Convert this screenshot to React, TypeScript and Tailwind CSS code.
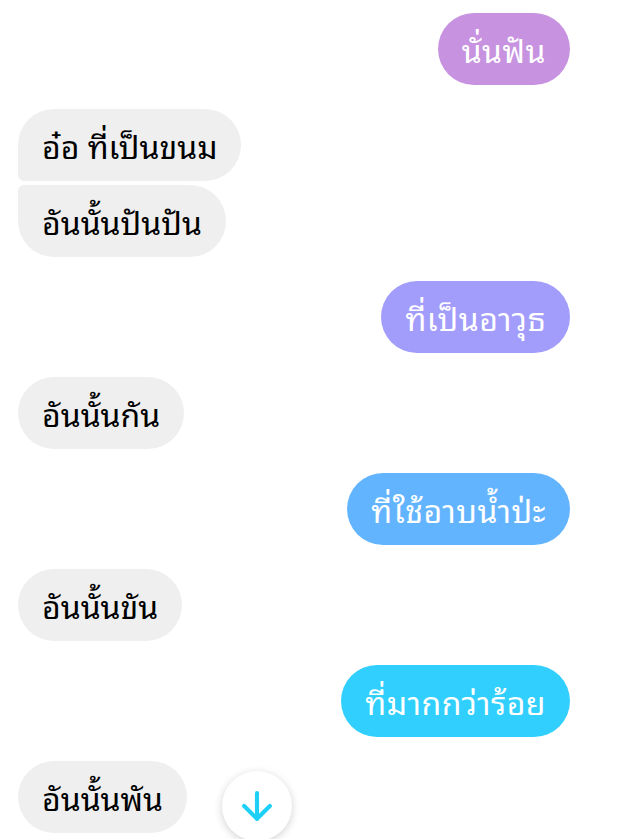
import React from "react";
import { ArrowDown } from "lucide-react";

type Msg = { id: number; text: string; mine: boolean; bg?: string; shape?: string };

const messages: Msg[] = [
  { id: 1, text: "นั่นฟัน", mine: true, bg: "bg-[#c792e0]" },
  { id: 2, text: "อ๋อ ที่เป็นขนม", mine: false, shape: "rounded-[36px] rounded-bl-[6px]" },
  { id: 3, text: "อันนั้นปันปัน", mine: false, shape: "rounded-[36px] rounded-tl-[6px]" },
  { id: 4, text: "ที่เป็นอาวุธ", mine: true, bg: "bg-[#a29cfb]" },
  { id: 5, text: "อันนั้นกัน", mine: false },
  { id: 6, text: "ที่ใช้อาบน้ำป่ะ", mine: true, bg: "bg-[#63b4fe]" },
  { id: 7, text: "อันนั้นขัน", mine: false },
  { id: 8, text: "ที่มากกว่าร้อย", mine: true, bg: "bg-[#31cffd]" },
  { id: 9, text: "อันนั้นพัน", mine: false },
];

export default function App() {
  return (
    <div className="relative h-[839px] w-[618px] overflow-hidden bg-white font-['Noto_Sans_Thai_Looped','Noto_Sans',sans-serif]">
      <div className="flex flex-col pl-[18px] pr-[48px] pt-[13px]">
        {messages.map((m, i) => {
          const prev = messages[i - 1];
          const gap = !prev ? "" : prev.mine === m.mine ? "mt-1" : "mt-6";
          return (
            <div key={m.id} className={`flex ${m.mine ? "justify-end" : "justify-start"} ${gap}`}>
              <div
                className={`flex h-[72px] items-center px-6 text-[32px] leading-none ${
                  m.mine
                    ? `${m.bg} text-white tracking-[0.5px] rounded-full`
                    : `bg-[#efefef] text-black ${m.shape ?? "rounded-full"}`
                }`}
              >
                {m.text}
              </div>
            </div>
          );
        })}
      </div>

      {/* scroll-to-bottom button floats over the list */}
      <button className="absolute left-[222px] top-[771px] flex h-[70px] w-[70px] items-center justify-center rounded-full bg-white shadow-[0_2px_8px_rgba(0,0,0,0.18)]">
        <ArrowDown className="h-11 w-11 text-[#1fd0f6]" strokeWidth={2.25} />
      </button>
    </div>
  );
}
